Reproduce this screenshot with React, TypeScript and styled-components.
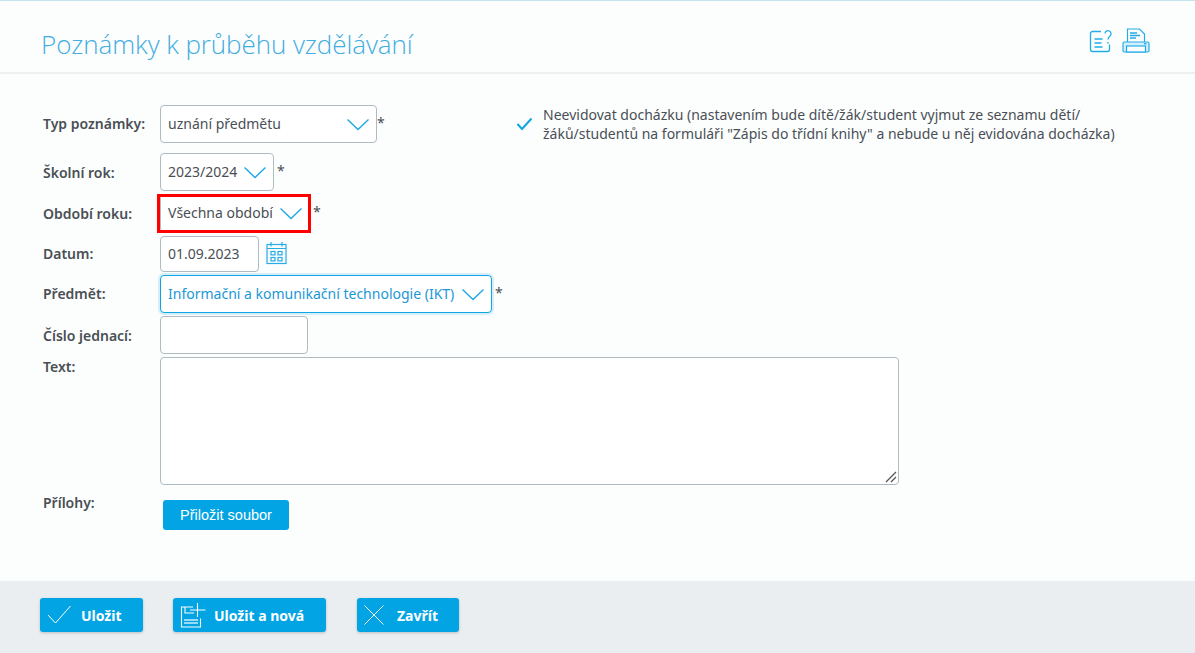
import React from "react";
import styled, { createGlobalStyle } from "styled-components";

const Global = createGlobalStyle`
  html, body { margin: 0; padding: 0; background: #fcfefe; }
  body { font-family: "Noto Sans", "Open Sans", sans-serif; color: #4a4f55; }
  * { box-sizing: border-box; }
`;
const Page = styled.div`
  width: 1195px; height: 653px; display: flex; flex-direction: column; overflow: hidden;
  border-top: 1px solid #c4e3f0;
`;
const Header = styled.header`
  height: 73px; flex: none; display: flex; align-items: center; justify-content: space-between;
  padding: 9px 45px 0 41px; border-bottom: 2px solid #eef0f1;
`;
const Title = styled.h1`
  margin: 5px 0 0; font-family: "Open Sans", sans-serif; font-weight: 300; font-size: 26px; letter-spacing: -0.07px; color: #43ace0;
`;
const HeaderIcons = styled.div`display: flex; gap: 9px; align-items: center;`;
const Form = styled.main`flex: 1; padding: 31px 0 0 43px; position: relative; display: flex; flex-direction: column;`;
const Row = styled.div<{ $h: number; $mt?: number }>`
  display: flex; align-items: center; height: ${p => p.$h}px; margin-top: ${p => p.$mt ?? 0}px;
`;
const TopRow = styled(Row)`align-items: flex-start;`;
const Label = styled.label<{ $up?: boolean }>`
  width: 117px; flex: none; font-size: 14px; font-weight: 600; color: #4a4f55;
  padding-bottom: ${p => (p.$up ? 2 : 0)}px;
`;
const Field = styled.div<{ $w: number; $h?: number; $focus?: boolean }>`
  width: ${p => p.$w}px; height: ${p => p.$h ?? 38}px; flex: none; display: flex; align-items: center; justify-content: space-between;
  padding: 0 6px 0 7px; background: #fff; border-radius: 4px; font-size: 14px;
  border: 1px solid ${p => (p.$focus ? "#0ea5e2" : "#aebcc2")};
  color: ${p => (p.$focus ? "#1c98d6" : "#4a4f55")};
  box-shadow: ${p => (p.$focus ? "0 0 0 2px #d6eef9" : "none")};
  white-space: nowrap;
`;
const FieldText = styled.span`padding-bottom: 2px;`;
const Marked = styled.div`
  position: relative; display: flex;
  &::after { content: ""; position: absolute; left: -3px; right: -1px; top: 0; bottom: -1px; border: 3px solid #f00; }
`;
const Star = styled.span<{ $ml?: number }>`font-size: 14px; margin: -4px 0 0 ${p => p.$ml ?? 3}px; color: #4a4f55;`;
const Notice = styled.div`
  position: absolute; left: 516px; top: 31px; display: flex; align-items: center; gap: 10px;
  width: 640px; font-size: 14px; line-height: 19px; color: #4a4f55;
`;
const CalendarSlot = styled.span`display: flex; margin: -2px 0 0 7px;`;
const TextArea = styled.div`
  width: 739px; height: 128px; flex: none; background: #fff; border: 1px solid #aebcc2; border-radius: 4px; position: relative;
`;
const Grip = styled.svg`position: absolute; right: 1px; bottom: 1px;`;
const AttachLabel = styled(Label)`margin-right: 3px;`;
const Attach = styled.button`
  width: 126px; height: 30px; margin-top: 7px; border: 0; background: #03a4e4; color: #fff; border-radius: 3px;
  font-family: "Liberation Sans", Arial, sans-serif; font-size: 14.5px; padding: 0;
`;
const Footer = styled.footer`
  height: 72px; flex: none; background: #ebeef0; display: flex; align-items: flex-start; padding: 17px 0 0 40px;
`;
const Action = styled.button<{ $w: number; $ml: number; $icon: number }>`
  width: ${p => p.$w}px; margin-left: ${p => p.$ml}px; height: 34px; border: 0; background: #03a4e4; color: #fff; border-radius: 3px;
  box-shadow: 0 1px 3px rgba(0,0,0,.2); display: flex; align-items: center; padding: 0 0 0 7px; gap: ${p => p.$icon}px;
  font-family: "Noto Sans", sans-serif; font-weight: 700; font-size: 14px; white-space: nowrap;
`;

const Chevron = () => (
  <svg width="24" height="14" viewBox="0 0 24 14" fill="none" stroke="#1ea7e4" strokeWidth="1.4"><path d="M1.5 2.5 12 12.5 22.5 2.5" /></svg>
);

const Select = ({ w, value, focus }: { w: number; value: string; focus?: boolean }) => (
  <Field $w={w} $focus={focus}><FieldText>{value}</FieldText><Chevron /></Field>
);

const HelpIcon = () => (
  <svg width="24" height="24" viewBox="0 0 24 24" fill="none" stroke="#22ace6" strokeWidth="1.3">
    <path d="M12 2.5H3.5a2 2 0 0 0-2 2v16a2 2 0 0 0 2 2h15a2 2 0 0 0 2-2v-5" />
    <path d="M5.5 10h8M5.5 14h7M5.5 18h8" strokeWidth="1.5" />
    <path d="M16 4.5a3 3 0 1 1 5 2.4c-1.2.9-2 1.5-2 3.6" />
    <path d="M19 13v1.5" strokeWidth="1.5" />
  </svg>
);
const PrintIcon = () => (
  <svg width="28" height="26" viewBox="0 0 28 26" fill="none" stroke="#22ace6" strokeWidth="1.2">
    <path d="M5.5 14V1h12l5 5v8" />
    <path d="M8 5h7M8 7.5h10M8 10h6" strokeWidth="1.3" />
    <rect x="1" y="14" width="26" height="10" rx="1.5" fill="#d5f0fb" />
    <rect x="4.5" y="18" width="19" height="6" fill="#fff" />
    <path d="M22 15.8h2.5" strokeWidth="1.4" />
  </svg>
);
const CalendarIcon = () => (
  <svg width="21" height="24" viewBox="0 0 21 24" fill="none" stroke="#26ace6" strokeWidth="1.2">
    <rect x="1" y="3.5" width="19" height="19" />
    <path d="M1 7.5h19M5 1v4.5M16 1v4.5" />
    <rect x="5" y="10.5" width="4" height="3.4" /><rect x="12" y="10.5" width="4" height="3.4" />
    <rect x="5" y="16.5" width="4" height="3.4" /><rect x="12" y="16.5" width="4" height="3.4" />
  </svg>
);
const CheckIcon = () => (
  <svg width="17" height="14" viewBox="0 0 17 14" fill="none" stroke="#0ea5e2" strokeWidth="2"><path d="M1.5 7 6 12 15.5 1.5" /></svg>
);
const SaveCheck = () => (
  <svg width="24" height="20" viewBox="0 0 24 20" fill="none" stroke="#fff" strokeWidth="1"><path d="M1 10 8.5 18 23.5 1" /></svg>
);
const SaveNew = () => (
  <svg width="26" height="26" viewBox="0 0 26 26" fill="none" stroke="#fff" strokeWidth="1.1">
    <path d="M13 5H1.5v20h19v-8.5" />
    <path d="M5 5v6h9" />
    <path d="M4 18h14M4 21h14" strokeWidth="1.4" opacity=".8" />
    <path d="M17.5 1v14M10 8h15.5" />
  </svg>
);
const CloseIcon = () => (
  <svg width="20" height="20" viewBox="0 0 20 20" fill="none" stroke="#fff" strokeWidth="1"><path d="M.5.5l19 19M19.5.5l-19 19" /></svg>
);

export default function App() {
  return (
    <Page>
      <Global />
      <Header>
        <Title>Poznámky k průběhu vzdělávání</Title>
        <HeaderIcons><HelpIcon /><PrintIcon /></HeaderIcons>
      </Header>
      <Form>
        <Notice>
          <CheckIcon />
          <span>Neevidovat docházku (nastavením bude dítě/žák/student vyjmut ze seznamu dětí/<br />žáků/studentů na formuláři "Zápis do třídní knihy" a nebude u něj evidována docházka)</span>
        </Notice>
        <Row $h={38}><Label $up>Typ poznámky:</Label><Select w={217} value="uznání předmětu" /><Star $ml={0}>*</Star></Row>
        <Row $h={38} $mt={10}><Label>Školní rok:</Label><Select w={114} value="2023/2024" /><Star>*</Star></Row>
        <Row $h={38} $mt={3}><Label>Období roku:</Label><Marked><Select w={150} value="Všechna období" /></Marked><Star>*</Star></Row>
        <Row $h={36} $mt={4}><Label $up>Datum:</Label><Field $w={99} $h={36}><FieldText>01.09.2023</FieldText></Field><CalendarSlot><CalendarIcon /></CalendarSlot></Row>
        <Row $h={38} $mt={3}><Label $up>Předmět:</Label><Select w={332} value="Informační a komunikační technologie (IKT)" focus /><Star>*</Star></Row>
        <Row $h={38} $mt={3}><Label>Číslo jednací:</Label><Field $w={148} /></Row>
        <TopRow $h={128} $mt={3}>
          <Label>Text:</Label>
          <TextArea>
            <Grip width="12" height="12" viewBox="0 0 12 12" stroke="#555" strokeWidth="1.3"><path d="M1 11 11 1M6 11l5-5" /></Grip>
          </TextArea>
        </TopRow>
        <TopRow $h={37} $mt={8}><AttachLabel>Přílohy:</AttachLabel><Attach>Přiložit soubor</Attach></TopRow>
      </Form>
      <Footer>
        <Action $w={103} $ml={0} $icon={10}><SaveCheck />Uložit</Action>
        <Action $w={153} $ml={30} $icon={8}><SaveNew />Uložit a nová</Action>
        <Action $w={102} $ml={31} $icon={13}><CloseIcon />Zavřít</Action>
      </Footer>
    </Page>
  );
}
